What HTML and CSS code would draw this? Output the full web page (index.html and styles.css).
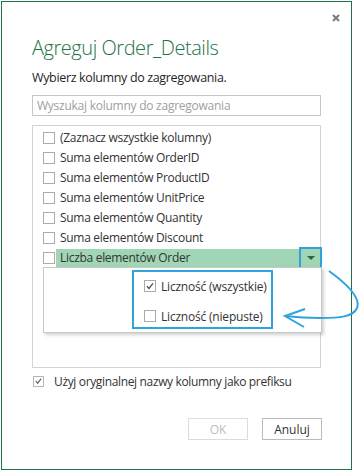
FILE: index.html
```html
<!DOCTYPE html>
<html lang="pl">
<head>
    <meta charset="UTF-8">
    <meta name="viewport" content="width=device-width, initial-scale=1.0">
    <title>Agreguj Order_Details</title>
    <link rel="stylesheet" href="styles.css">
</head>
<body>

    <div class="dialog">
        <!-- zamknij -->
        <div class="dialog-head">
            <button class="btn-close" title="Zamknij">
                <svg width="8" height="8" viewBox="0 0 8 8"><path d="M1 1L7 7M7 1L1 7" stroke="#7a7a7a" stroke-width="2"/></svg>
            </button>
        </div>

        <h1 class="title">Agreguj Order_Details</h1>
        <p class="subtitle">Wybierz kolumny do zagregowania.</p>

        <input type="text" class="search" placeholder="Wyszukaj kolumny do zagregowania">

        <!-- lista kolumn -->
        <div class="list">
            <div class="row"><span class="check"></span><span class="label">(Zaznacz wszystkie kolumny)</span></div>
            <div class="row"><span class="check"></span><span class="label">Suma elementów OrderID</span></div>
            <div class="row"><span class="check"></span><span class="label">Suma elementów ProductID</span></div>
            <div class="row"><span class="check"></span><span class="label">Suma elementów UnitPrice</span></div>
            <div class="row"><span class="check"></span><span class="label">Suma elementów Quantity</span></div>
            <div class="row"><span class="check"></span><span class="label">Suma elementów Discount</span></div>
            <div class="row row-active">
                <span class="check"></span>
                <span class="label">Liczba elementów Order</span>
                <button class="btn-drop"><span class="tri"></span></button>
            </div>
            <!-- wiersz schowany pod menu -->
            <div class="row"><span class="check"></span></div>

            <!-- menu rozwijane -->
            <div class="popup">
                <div class="menu">
                    <div class="menu-item">
                        <span class="check">
                            <svg width="10" height="10" viewBox="0 0 10 10"><path d="M2 5.2L4 7.4L8 2.4" fill="none" stroke="#555" stroke-width="1.4"/></svg>
                        </span>
                        <span>Liczność (wszystkie)</span>
                    </div>
                    <div class="menu-item">
                        <span class="check"></span>
                        <span>Liczność (niepuste)</span>
                    </div>
                </div>
            </div>
        </div>

        <label class="prefix">
            <span class="check">
                <svg width="10" height="10" viewBox="0 0 10 10"><path d="M2 5.2L4 7.4L8 2.4" fill="none" stroke="#666" stroke-width="1.4"/></svg>
            </span>
            <span>Użyj oryginalnej nazwy kolumny jako prefiksu</span>
        </label>

        <div class="actions">
            <button class="btn btn-ok" disabled>OK</button>
            <button class="btn btn-cancel">Anuluj</button>
        </div>
    </div>

    <!-- strzałka objaśnienia -->
    <svg class="arrow" width="359" height="473" viewBox="0 0 359 473">
        <path d="M329 271C347 284 361 298 357 308C353 317 340 318 320 318C305 318 294 317 285 316" fill="none" stroke="#2ea3dd" stroke-width="2"/>
        <path d="M305 309L285 316L304 327" fill="none" stroke="#2ea3dd" stroke-width="2"/>
    </svg>

</body>
</html>
```

FILE: styles.css
```css
body { margin: 0; position: relative; font-family: "Open Sans", "Noto Sans", sans-serif; color: #333; background: #fff; }
.dialog { margin: 1px 0 0 1px; width: 351px; height: 469px; box-sizing: border-box; border: 1px solid #217346; padding: 0 30px; }
.dialog-head { display: flex; justify-content: flex-end; height: 28px; margin-right: -21px; }
.btn-close { margin-top: 10px; width: 12px; height: 12px; padding: 2px; border: none; background: none; cursor: pointer; }
.btn-close svg { display: block; }
.title { margin: 4px 0 0; font-size: 20px; font-weight: 300; line-height: 28px; color: #217346; letter-spacing: -0.45px; }
.subtitle { margin: 7px 0 0; font-size: 12.5px; line-height: 18px; color: #262626; letter-spacing: -0.35px; }
.search { display: block; margin-top: 8px; width: 100%; height: 21px; box-sizing: border-box; border: 1px solid #c6c6c6; padding: 0 4px; font-family: inherit; font-size: 12px; letter-spacing: -0.25px; }
.search::placeholder { color: #a0a0a0; }
.list { position: relative; margin-top: 9px; height: 243px; box-sizing: border-box; border: 1px solid #d4d4d4; padding: 2px 0 0 10px; font-size: 12px; letter-spacing: -0.3px; }
.row { display: flex; align-items: center; height: 20px; white-space: nowrap; }
.check { display: inline-flex; align-items: center; justify-content: center; width: 12px; height: 12px; box-sizing: border-box; border: 1px solid #ababab; background: #fff; flex: none; }
.row .label { margin-left: 1px; padding-left: 4px; line-height: 20px; }
.row-active { margin-right: -2px; }
.row-active .label { flex: 1; padding-left: 4px; height: 18px; line-height: 18px; background: #a0d6b5; }
.btn-drop { display: flex; align-items: center; justify-content: center; width: 23px; height: 23px; padding: 0; border: 2px solid #2ea3dd; background: #a0d6b5; cursor: pointer; }
.tri { width: 0; height: 0; border-left: 4px solid transparent; border-right: 4px solid transparent; border-top: 4px solid #1f6a3f; }
.popup { position: absolute; left: 10px; top: 141px; width: 279px; height: 66px; box-sizing: border-box; border: 1px solid #c8c8c8; background: #fff; box-shadow: 2px 2px 3px rgba(0, 0, 0, 0.18); padding: 2px 0 0 88px; }
.menu { width: 141px; height: 59px; box-sizing: border-box; border: 2px solid #2ea3dd; padding: 4px 0 0 10px; white-space: nowrap; letter-spacing: -0.2px; }
.menu-item { display: flex; align-items: center; gap: 5px; height: 20px; margin-bottom: 10px; }
.prefix { display: flex; align-items: center; gap: 10px; margin-top: 6px; height: 14px; padding-left: 1px; font-size: 12px; letter-spacing: -0.35px; }
.prefix .check { width: 11px; height: 11px; border-color: #b5b5b5; }
.actions { display: flex; justify-content: flex-end; gap: 14px; margin-top: 30px; margin-right: -1px; }
.btn { width: 60px; height: 22px; padding: 0; font-family: inherit; font-size: 12px; background: #fff; cursor: pointer; }
.btn-ok { border: 1px solid #dcdcdc; color: #bdbdbd; }
.btn-cancel { border: 1px solid #bcbcbc; color: #333; }
.arrow { position: absolute; left: 0; top: 0; pointer-events: none; }
```
